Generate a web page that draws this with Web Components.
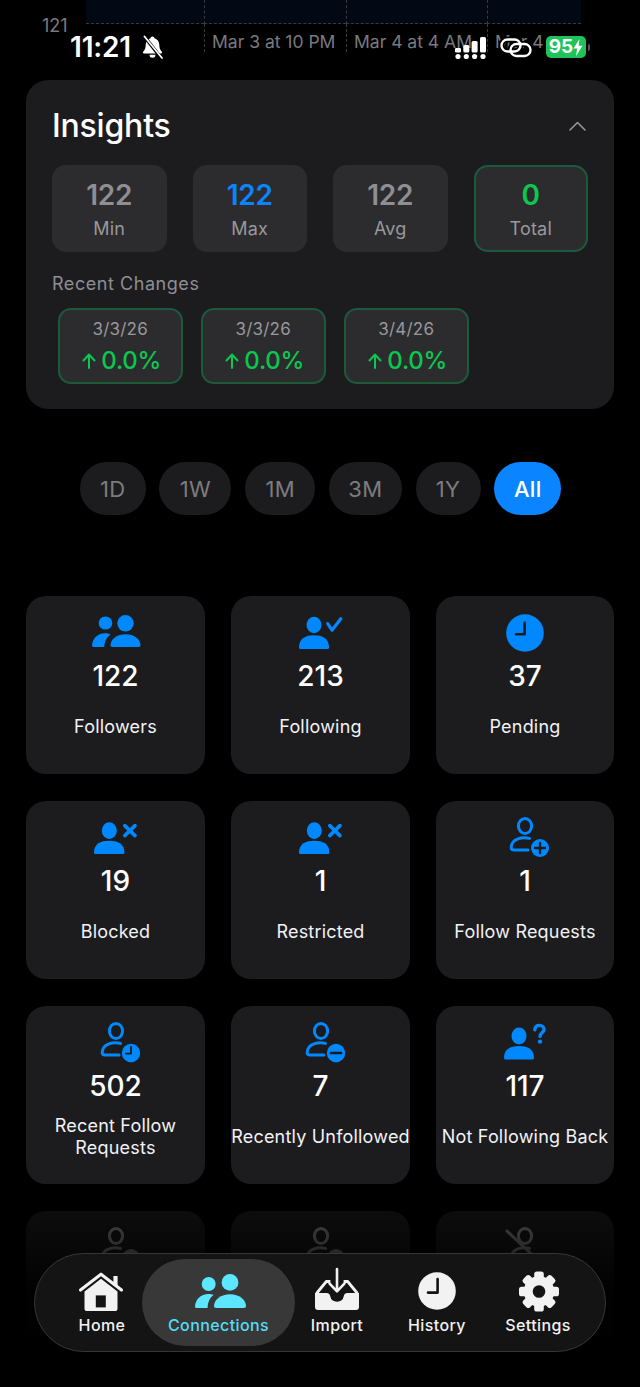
<!DOCTYPE html>
<html lang="en">
<head>
<meta charset="utf-8">
<title>Connections</title>
<style>
  html,body{margin:0;background:#000;}
  body{font-family:Inter,"Liberation Sans",sans-serif;color:#fff;}
  #page{width:640px;height:1387px;position:relative;overflow:hidden;background:#000;}
</style>
</head>
<body>
<div id="page">
  <chart-strip></chart-strip>
  <status-bar></status-bar>
  <insights-card>
    <stat-box slot="stats" value="122" label="Min"></stat-box>
    <stat-box slot="stats" value="122" label="Max" tone="blue"></stat-box>
    <stat-box slot="stats" value="122" label="Avg"></stat-box>
    <stat-box slot="stats" value="0" label="Total" tone="green"></stat-box>
    <change-chip slot="changes" date="3/3/26" value="0.0%"></change-chip>
    <change-chip slot="changes" date="3/3/26" value="0.0%"></change-chip>
    <change-chip slot="changes" date="3/4/26" value="0.0%"></change-chip>
  </insights-card>
  <range-pills>
    <range-pill style="--w:66px">1D</range-pill>
    <range-pill style="--w:72px">1W</range-pill>
    <range-pill style="--w:70px">1M</range-pill>
    <range-pill style="--w:73px">3M</range-pill>
    <range-pill style="--w:65px">1Y</range-pill>
    <range-pill style="--w:67px" active>All</range-pill>
  </range-pills>
  <conn-grid>
    <conn-card icon="followers" value="122" label="Followers"></conn-card>
    <conn-card icon="following" value="213" label="Following"></conn-card>
    <conn-card icon="pending" value="37" label="Pending"></conn-card>
    <conn-card icon="blocked" value="19" label="Blocked"></conn-card>
    <conn-card icon="blocked" value="1" label="Restricted"></conn-card>
    <conn-card icon="reqplus" value="1" label="Follow Requests"></conn-card>
    <conn-card icon="reqclock" value="502" label="Recent Follow Requests"></conn-card>
    <conn-card icon="reqminus" value="7" label="Recently Unfollowed"></conn-card>
    <conn-card icon="question" value="117" label="Not Following Back"></conn-card>
    <conn-card icon="outlineA" dim></conn-card>
    <conn-card icon="outlineA" dim></conn-card>
    <conn-card icon="outlineSlash" dim></conn-card>
  </conn-grid>
  <bottom-fade></bottom-fade>
  <bottom-nav>
    <nav-item icon="home" label="Home" style="--w:83px;--lm:3px"></nav-item>
    <nav-item icon="people" label="Connections" style="--w:153px" active></nav-item>
    <nav-item icon="import" label="Import" style="--w:84px"></nav-item>
    <nav-item icon="history" label="History" style="--w:82px;--ml:17px"></nav-item>
    <nav-item icon="gear" label="Settings" style="--w:82px;--ml:19px"></nav-item>
  </bottom-nav>
</div>
<script>
const personSolid = (cx, cy, rx, ry, x0, x1, y0, y1) => `
  <ellipse cx="${cx}" cy="${cy}" rx="${rx}" ry="${ry}" fill="currentColor"/>
  <path fill="currentColor" d="M${x0} ${y1-1.5}C${x0} ${y0+3} ${x0+(x1-x0)*.22} ${y0} ${(x0+x1)/2} ${y0}S${x1} ${y0+3} ${x1} ${y1-1.5}Q${x1} ${y1} ${x1-1.5} ${y1}H${x0+1.5}Q${x0} ${y1} ${x0} ${y1-1.5}Z"/>`;
const personOutline = `
  <ellipse cx="30" cy="11" rx="6.6" ry="7.6" fill="none" stroke="currentColor" stroke-width="3"/>
  <path fill="none" stroke="currentColor" stroke-width="3" stroke-linecap="round" d="M34.5 23.4C28 22 16.5 23 16.2 32.5Q16.2 35 19 35H33"/>`;
const ICONS = {
  followers:`<svg viewBox="0 0 60 44" width="60" height="44">
    <ellipse cx="19.5" cy="13" rx="6.8" ry="6.6" fill="currentColor"/>
    <path fill="currentColor" d="M6 35.5C6.5 28 12 23.3 19 23.3c2.2 0 4 .4 5.8 1.3C21 27 18.6 31 18.3 36.9H7.5Q6 36.9 6 35.5Z"/>
    <ellipse cx="39.5" cy="13.3" rx="8.2" ry="8.3" fill="currentColor"/>
    <path fill="currentColor" d="M24.5 35.2C24.5 29 31 24.2 39.5 24.2S54.5 29 54.5 35.2Q54.5 37 52.8 37H26.2Q24.5 37 24.5 35.2Z"/></svg>`,
  following:`<svg viewBox="0 0 60 44" width="60" height="44">
    ${personSolid(23,15,7.5,8.2,8,38,25.2,39)}
    <path fill="none" stroke="currentColor" stroke-width="3.2" stroke-linecap="round" stroke-linejoin="round" d="M36.7 13.6L41 20.2L49.8 8.7"/></svg>`,
  pending:`<svg viewBox="0 0 60 44" width="60" height="44">
    <circle cx="30" cy="23" r="18.8" fill="currentColor"/>
    <path fill="none" stroke="#1c1c1e" stroke-width="2.6" stroke-linecap="round" stroke-linejoin="round" d="M29.6 12.8V24.2H21"/></svg>`,
  blocked:`<svg viewBox="0 0 60 44" width="60" height="44">
    ${personSolid(23.3,15.6,7.5,8.4,8,38.4,25.8,39)}
    <path fill="none" stroke="currentColor" stroke-width="3.6" stroke-linecap="round" d="M38.8 10.6L49 20.6M49 10.6L38.8 20.6"/></svg>`,
  reqplus:`<svg viewBox="0 0 60 44" width="60" height="44">${personOutline}
    <circle cx="45" cy="33" r="9" fill="currentColor"/>
    <path stroke="#1c1c1e" stroke-width="2.4" stroke-linecap="round" d="M45 28v10M40 33h10"/></svg>`,
  reqclock:`<svg viewBox="0 0 60 44" width="60" height="44">${personOutline}
    <circle cx="45" cy="33" r="9.2" fill="currentColor"/>
    <path fill="none" stroke="#1c1c1e" stroke-width="1.8" stroke-linecap="round" stroke-linejoin="round" d="M45 27v6.6h-5"/></svg>`,
  reqminus:`<svg viewBox="0 0 60 44" width="60" height="44">${personOutline}
    <circle cx="45" cy="33" r="9.2" fill="currentColor"/>
    <path stroke="#1c1c1e" stroke-width="2.6" stroke-linecap="round" d="M40 33h10"/></svg>`,
  question:`<svg viewBox="0 0 60 44" width="60" height="44">
    ${personSolid(24,16,7.5,8.4,9,39,26,39.4)}
    <path fill="none" stroke="currentColor" stroke-width="3.4" stroke-linecap="round" d="M39.8 9.8C40 6.8 42 5.4 44.4 5.4C47 5.4 49 7 49 9.4C49 12.6 45 13 45 16.4"/>
    <circle cx="45" cy="21.6" r="2.2" fill="currentColor"/></svg>`,
  outlineA:`<svg viewBox="0 0 60 44" width="60" height="44">${personOutline}
    <circle cx="45" cy="33" r="9" fill="currentColor"/></svg>`,
  outlineSlash:`<svg viewBox="0 0 60 44" width="60" height="44">${personOutline}
    <path stroke="currentColor" stroke-width="3" stroke-linecap="round" d="M12 6L48 40"/></svg>`,
  home:`<svg viewBox="0 0 60 48" width="60" height="48">
    <rect x="42.4" y="10" width="4.2" height="10" fill="currentColor"/>
    <path fill="none" stroke="currentColor" stroke-width="3.1" stroke-linecap="round" stroke-linejoin="round" d="M9.5 24L30 8.2L50.5 24"/>
    <path fill="currentColor" d="M13.5 25.5L30 12.8L46.5 25.5V42.5a2.6 2.6 0 0 1-2.6 2.6H16.1a2.6 2.6 0 0 1-2.6-2.6Z"/>
    <rect x="24.8" y="29.4" width="10" height="12" fill="#141414"/></svg>`,
  people:`<svg viewBox="0 0 60 48" width="60" height="48">
    <circle cx="19.7" cy="18" r="7" fill="currentColor"/>
    <path fill="currentColor" d="M6 40.5C6.5 33 12 28 19.4 28c2 0 3.6.3 5.2 1C21 31.4 18.8 36 18.6 42H7.6Q6 42 6 40.5Z"/>
    <circle cx="41" cy="16.4" r="8.4" fill="currentColor"/>
    <path fill="currentColor" d="M25 40C25 33.6 32 28.2 41 28.2S57 33.6 57 40Q57 42 55 42H27Q25 42 25 40Z"/></svg>`,
  import:`<svg viewBox="0 0 60 48" width="60" height="48">
    <path fill="none" stroke="currentColor" stroke-width="3" stroke-linejoin="round" d="M9.6 27.4L19.2 15.6H23.4M36.6 15.6H40.8L50.4 27.4"/>
    <path fill="currentColor" d="M8 27H19.5c2.2 0 3.2 1 3.7 3a6.9 6.9 0 0 0 13.6 0c.5-2 1.5-3 3.7-3H52V41a3 3 0 0 1-3 3H11a3 3 0 0 1-3-3Z"/>
    <path fill="none" stroke="currentColor" stroke-width="2.6" stroke-linecap="round" stroke-linejoin="round" d="M30 3V25M22.6 17.6L30 25.4L37.4 17.6"/></svg>`,
  history:`<svg viewBox="0 0 60 48" width="60" height="48">
    <circle cx="30" cy="25" r="18.8" fill="currentColor"/>
    <path fill="none" stroke="#141414" stroke-width="2.6" stroke-linecap="round" stroke-linejoin="round" d="M30.6 13V26.6H21"/></svg>`,
  gear:`<svg viewBox="0 0 60 48" width="60" height="48"><g transform="translate(31 25.5)" fill="currentColor">
    <circle r="15.2"/>
    <rect x="-4.8" y="-20" width="9.6" height="40" rx="2.6"/>
    <rect x="-4.8" y="-20" width="9.6" height="40" rx="2.6" transform="rotate(45)"/>
    <rect x="-4.8" y="-20" width="9.6" height="40" rx="2.6" transform="rotate(90)"/>
    <rect x="-4.8" y="-20" width="9.6" height="40" rx="2.6" transform="rotate(135)"/>
    <circle r="6.3" fill="#141414"/></g></svg>`
};
function shell(el, html){ el.attachShadow({mode:'open'}).innerHTML = html; }
const define = (name, render) => customElements.define(name, class extends HTMLElement {
  connectedCallback(){ if(!this.shadowRoot) shell(this, render(this)); }
});

define('chart-strip', () => `<style>
  :host{display:block;height:80px;overflow:hidden;font-size:17.5px;color:#7a7a7e;}
  .g{display:grid;grid-template-columns:204px 142px 141px 94px 1fr;grid-template-rows:24px 28px;}
  .p{background:#020914;border-bottom:1px dashed #3a3a3c;box-sizing:border-box;}
  .p+.p{border-left:1px dashed #3a3a3c;}
  .p.first{margin-left:86px;}
  .t{border-left:1px dashed #3a3a3c;padding:5px 0 0 7px;white-space:nowrap;line-height:26px;box-sizing:border-box;}
  .y{padding-left:42px;line-height:22px;margin-top:-9px;font-size:18px;}
</style><div class="g">
  <div class="p first"></div><div class="p"></div><div class="p"></div><div class="p"></div><div></div>
  <div class="y"><span>121</span></div>
  <div class="t">Mar 3 at 10 PM</div><div class="t">Mar 4 at 4 AM</div><div class="t">Mar 4</div><div></div>
</div>`);

define('status-bar', () => `<style>
  :host{position:absolute;left:0;top:35px;width:640px;height:24px;display:flex;align-items:center;color:#fff;}
  .time{margin-left:70px;font-size:28px;font-weight:600;letter-spacing:-.2px;line-height:24px;width:71px;}
  svg{display:block;flex:none;}
  .bell{margin-right:292px;}
  .batt{width:40px;height:22px;background:#20c35a;border-radius:5px;display:flex;align-items:center;justify-content:center;gap:0;font-size:19px;font-weight:700;line-height:22px;margin-left:13px;}
  .nub{width:2px;height:7px;background:#555;border-radius:0 2px 2px 0;margin-left:2px;}
</style>
<span class="time">11:21</span>
<svg class="bell" width="23" height="24" viewBox="0 0 23 24">
  <path fill="#fff" d="M11.5 1.5c1.1 0 1.9.8 2 1.8 3 .8 4.6 3.3 4.8 6.5.1 3.4.7 5 2.5 7 .6.8.2 1.7-.8 1.7H3c-1 0-1.4-.9-.8-1.7 1.8-2 2.4-3.6 2.5-7 .2-3.2 1.8-5.7 4.8-6.5.1-1 .9-1.8 2-1.8Z"/>
  <path fill="#fff" d="M8.5 19.8h6a3 3 0 0 1-6 0Z"/>
  <path stroke="#000" stroke-width="3.4" d="M3 1L21 24"/>
  <path stroke="#fff" stroke-width="1.8" stroke-linecap="round" d="M3.5 1.5L21 23"/>
</svg>
<svg width="32" height="23" viewBox="0 0 32 23" fill="#fff" style="margin-left:-1px">
  <rect x="0" y="12" width="6" height="4.5" rx="1.2"/><rect x="8.3" y="9" width="6" height="7.5" rx="1.5"/><rect x="16.6" y="5" width="6" height="11.5" rx="1.5"/><rect x="25" y="1" width="6" height="15.5" rx="1.5"/>
  <circle cx="3" cy="20.5" r="2.6"/><circle cx="11.3" cy="20.5" r="2.6"/><circle cx="19.6" cy="20.5" r="2.6"/><circle cx="28" cy="20.5" r="2.6"/>
</svg>
<svg width="34" height="23" viewBox="0 0 34 23" fill="none" style="margin-left:12px">
  <g stroke="#000" stroke-width="6"><rect x="2.5" y="3.5" width="19" height="12" rx="6"/><rect x="11.5" y="8" width="20" height="12" rx="6"/></g>
  <g stroke="#fff" stroke-width="2.4"><rect x="2.5" y="3.5" width="19" height="12" rx="6"/><rect x="11.5" y="8" width="20" height="12" rx="6"/></g>
</svg>
<div class="batt"><span>95</span><svg width="10" height="17" viewBox="0 0 10 17"><path fill="#fff" d="M6.5 0L0.5 9.5H4.2L3 17L9.5 6.8H5.6Z"/></svg></div>
<span class="nub"></span>`);

define('insights-card', () => `<style>
  :host{display:block;margin:0 26px;height:329px;box-sizing:border-box;padding:0 26px;background:#1c1c1e;border-radius:22px;}
  .h{height:85px;display:flex;align-items:center;justify-content:space-between;padding-top:7px;box-sizing:border-box;}
  h2{margin:0;font-size:32px;font-weight:500;letter-spacing:-.2px;line-height:40px;color:#fff;}
  svg{display:block;margin-right:2px;}
  .s{display:grid;grid-template-columns:repeat(4,1fr);gap:26px;}
  .l{margin-top:20px;line-height:24px;font-size:18px;letter-spacing:.55px;color:#8e8e93;}
  .c{display:flex;gap:18.5px;margin:12px 0 0 6px;}
</style>
<div class="h"><h2>Insights</h2><svg width="17" height="10" viewBox="0 0 17 10"><path fill="none" stroke="#98989d" stroke-width="1.5" stroke-linecap="round" stroke-linejoin="round" d="M1 9L8.5 1.5L16 9"/></svg></div>
<div class="s"><slot name="stats"></slot></div>
<div class="l">Recent Changes</div>
<div class="c"><slot name="changes"></slot></div>`);

define('stat-box', el => {
  const tone = el.getAttribute('tone');
  const color = tone==='blue' ? '#0a84ff' : tone==='green' ? '#0ac850' : '#8e8e93';
  return `<style>
    :host{display:flex;flex-direction:column;align-items:center;height:87px;box-sizing:border-box;background:#2c2c2e;border-radius:14px;
      ${tone==='green'?'border:2px solid #1c5a3c;':'border:2px solid transparent;'}}
    .v{margin-top:10.5px;font-size:28px;font-weight:600;letter-spacing:-.2px;line-height:34px;color:${color};}
    .k{margin-top:5px;font-size:18px;line-height:24px;letter-spacing:.2px;color:#98989d;}
  </style><div class="v">${el.getAttribute('value')}</div><div class="k">${el.getAttribute('label')}</div>`;
});

define('change-chip', el => `<style>
  :host{display:flex;flex-direction:column;align-items:center;width:124.5px;height:76px;box-sizing:border-box;background:#2c2c2e;border:2px solid #1c5a3c;border-radius:13px;}
  .d{margin-top:6.5px;font-size:17px;letter-spacing:.2px;line-height:24px;color:#98989d;}
  .v{display:flex;align-items:center;gap:5px;margin-top:4px;padding-left:3px;font-size:24px;font-weight:500;letter-spacing:-.2px;line-height:32px;color:#0ac850;}
  svg{display:block;}
</style><div class="d">${el.getAttribute('date')}</div>
<div class="v"><svg width="14" height="16" viewBox="0 0 14 16"><path fill="none" stroke="#0ac850" stroke-width="2" stroke-linecap="round" stroke-linejoin="round" d="M7 15V2M1.5 7.5L7 1.5L12.5 7.5"/></svg><span>${el.getAttribute('value')}</span></div>`);

define('range-pills', () => `<style>
  :host{display:flex;justify-content:center;gap:13.7px;margin-top:53px;height:53px;padding-left:1px;}
</style><slot></slot>`);

define('range-pill', el => {
  const on = el.hasAttribute('active');
  return `<style>
    :host{display:flex;align-items:center;justify-content:center;width:var(--w);height:53px;border-radius:27px;font-size:22px;letter-spacing:.3px;
      font-weight:${on?500:400};background:${on?'#0a84ff':'#1c1c1e'};color:${on?'#fff':'#7c7c80'};}
  </style><slot></slot>`;
});

define('conn-grid', () => `<style>
  :host{display:grid;grid-template-columns:179px 179px 178px;column-gap:26px;row-gap:27px;margin:81px 26px 0;}
</style><slot></slot>`);

define('conn-card', el => {
  const dim = el.hasAttribute('dim');
  const v = el.getAttribute('value'), l = el.getAttribute('label');
  return `<style>
    :host{display:flex;flex-direction:column;align-items:center;height:178px;box-sizing:border-box;padding-top:14px;background:#1c1c1e;border-radius:20px;color:#0088ff;overflow:hidden;}
    .i{height:44px;${dim?'color:#9a9a9a;':''}}
    svg{display:block;}
    .n{margin-top:5px;font-size:28px;font-weight:500;line-height:34px;color:#fff;}
    .l{flex:none;margin-top:10px;height:48px;width:179px;display:flex;align-items:center;justify-content:center;text-align:center;font-size:18px;line-height:22px;letter-spacing:.2px;color:#f2f2f7;}
    .l span{display:block;}
  </style><div class="i">${ICONS[el.getAttribute('icon')]}</div>
  ${v?`<div class="n">${v}</div>`:''}${l?`<div class="l"><span>${l}</span></div>`:''}`;
});

define('bottom-fade', () => `<style>
  :host{position:absolute;left:0;right:0;top:1186px;bottom:0;display:block;
    background:linear-gradient(to bottom,rgba(0,0,0,0) 0,rgba(0,0,0,.55) 25px,rgba(0,0,0,.72) 60px,rgba(0,0,0,.97) 110px,#000 200px);}
</style>`);

define('bottom-nav', () => `<style>
  :host{position:absolute;left:34px;top:1253px;width:572px;height:99px;box-sizing:border-box;display:flex;align-items:center;padding-left:24px;
    background:#141414;border:1px solid #363638;border-radius:50px;}
</style><slot></slot>`);

define('nav-item', el => {
  const on = el.hasAttribute('active');
  return `<style>
    :host{display:flex;flex-direction:column;align-items:center;flex:none;width:var(--w);margin-left:var(--ml,0);height:87px;border-radius:44px;
      background:${on?'#383838':'transparent'};color:${on?'#5ce6ff':'#f2f2f2'};}
    .i{margin-top:7px;height:48px;} svg{display:block;}
    .t{margin-left:var(--lm,0);font-size:16px;font-weight:500;line-height:22px;letter-spacing:.4px;white-space:nowrap;color:${on?'#55dcf5':'#f2f2f2'};}
  </style><div class="i">${ICONS[el.getAttribute('icon')]}</div><div class="t">${el.getAttribute('label')}</div>`;
});
</script>
</body>
</html>
